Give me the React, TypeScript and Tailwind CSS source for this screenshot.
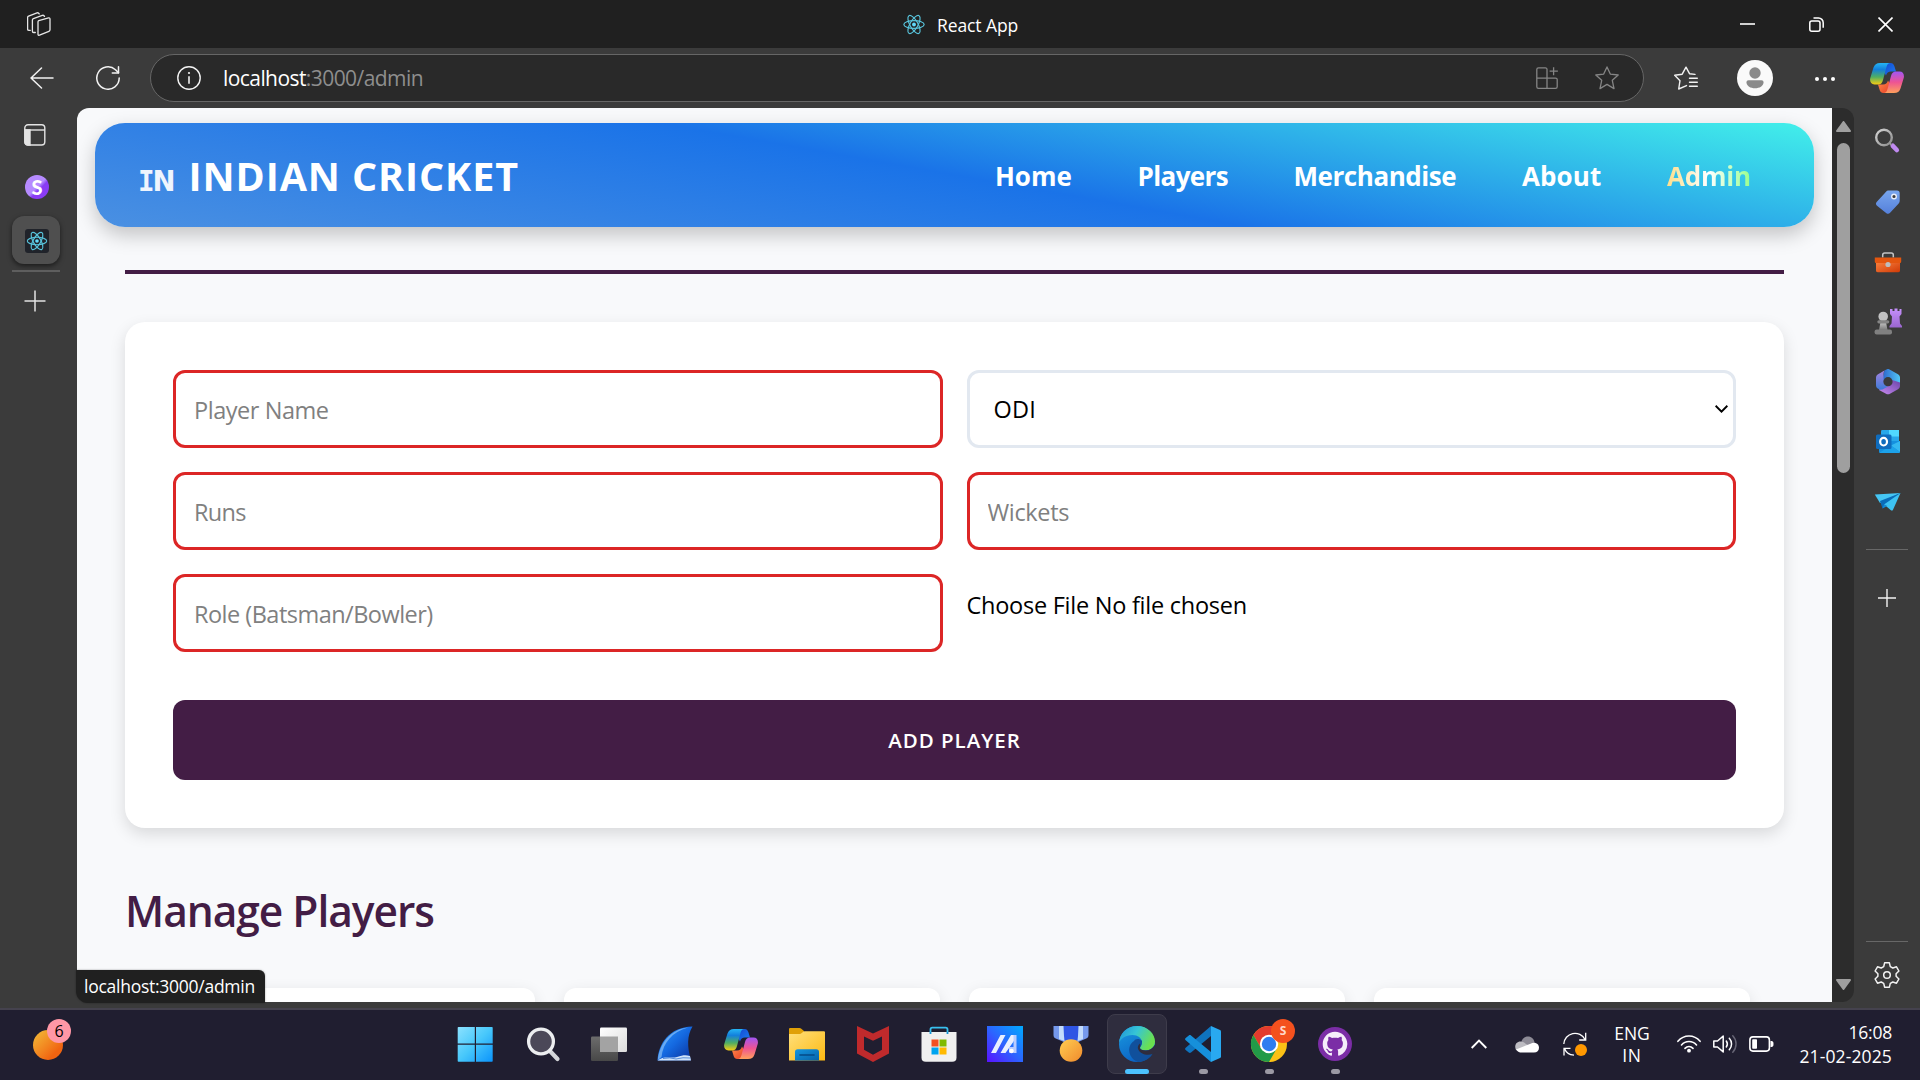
import React from "react";

type P = { className?: string };

const ReactLogo = ({ className = "" }: P) => (
  <svg viewBox="-12 -12 24 24" className={className} fill="none" stroke="#58c4dc" strokeWidth="1.25">
    <circle r="2" fill="#61dafb" stroke="none" />
    <ellipse rx="10.6" ry="4.1" />
    <ellipse rx="10.6" ry="4.1" transform="rotate(60)" />
    <ellipse rx="10.6" ry="4.1" transform="rotate(120)" />
  </svg>
);

const Copilot = ({ className = "" }: P) => (
  <svg viewBox="0 0 34 30" className={className}>
    <defs>
      <linearGradient id="cpA" x1="0" y1="0" x2="0" y2="1">
        <stop offset="0" stopColor="#25b5f5" />
        <stop offset=".3" stopColor="#1380dc" />
        <stop offset=".65" stopColor="#4fae62" />
        <stop offset="1" stopColor="#f9cd12" />
      </linearGradient>
      <linearGradient id="cpB" x1="0" y1="0" x2="0" y2="1">
        <stop offset="0" stopColor="#a155f5" />
        <stop offset=".5" stopColor="#ee5493" />
        <stop offset="1" stopColor="#ffa05c" />
      </linearGradient>
      <linearGradient id="cpC" x1="0" y1="0" x2="1" y2="1">
        <stop offset="0" stopColor="#1449d2" />
        <stop offset="1" stopColor="#1d7df0" />
      </linearGradient>
      <linearGradient id="cpD" x1="0" y1="0" x2="1" y2="1">
        <stop offset="0" stopColor="#ff8a48" />
        <stop offset="1" stopColor="#e8402a" />
      </linearGradient>
    </defs>
    <path d="M16 0h4.500c2.400 0 3.400 1.500 4 3.600L26 8.500h-5c-2.800 0-4.200 1.500-5 4L14 9z" fill="url(#cpC)" />
    <path d="M18 30h-4.500c-2.400 0-3.400-1.500-4-3.600L8 21.500h5c2.800 0 4.200-1.500 5-4L20 21z" fill="url(#cpD)" />
    <path d="M10 0h10.500c-2.300 0-3.300 1.600-4 4L13 17c-.8 3-2.200 4.500-5 4.500H4.500C1 21.500-.6 18.500.3 15L3.400 4.800C4.500 1.500 6.500 0 10 0z" fill="url(#cpA)" />
    <path d="M24 30H13.500c2.300 0 3.300-1.600 4-4L21 13c.8-3 2.200-4.500 5-4.500h3.500c3.500 0 5.100 3 4.200 6.500l-3.100 10.200C29.500 28.500 27.500 30 24 30z" fill="url(#cpB)" />
  </svg>
);

const TitleBar = () => (
  <div className="flex h-12 shrink-0 items-center bg-[#202020] text-white">
    <svg viewBox="0 0 24 24" className="ml-[27px] h-6 w-6" fill="none" stroke="#e6e6e6" strokeWidth="1.3" strokeLinejoin="round" strokeLinecap="round">
      <path d="M11.800 8.600 21.500 5.900c.8-.2 1.500.3 1.500 1.100v10.700c0 .8-.4 1.300-1.100 1.600l-9.400 3.900c-.8.3-1.500-.1-1.500-1V9.800c0-.6.300-1 .8-1.200z" />
      <path d="M8.300 20.500H6.700c-.8 0-1.300-.4-1.300-1.200V8c0-.7.300-1.100 1-1.400L15.300 3.400c.8-.3 1.700 0 2.200 1" />
      <path d="M3.300 18.300h-1.400c-.8 0-1.300-.4-1.300-1.200V5.500c0-.7.300-1.100 1-1.400L10 .9c.8-.3 1.700 0 2.200 1" />
    </svg>
    <ReactLogo className="ml-[851px] h-[23px] w-6" />
    <span className="ml-[11px] mt-0.5 w-[100px] text-[17.5px] leading-6 tracking-[-0.1px]">React App</span>
    <div className="ml-auto flex items-center gap-[54px] pr-[27px]">
      <svg viewBox="0 0 15 15" className="h-[15px] w-[15px]"><path d="M0 7h15" stroke="#fff" strokeWidth="1.600" /></svg>
      <svg viewBox="0 0 15 15" className="h-[15px] w-[15px]" fill="none" stroke="#fff" strokeWidth="1.500">
        <rect x=".8" y="4" width="10.200" height="10.200" rx="2" />
        <path d="M4.500 1h5A4.700 4.700 0 0 1 14.200 5.700v5" />
      </svg>
      <svg viewBox="0 0 15 15" className="h-[15px] w-[15px]"><path d="M.5.5l14 14M14.500.5l-14 14" stroke="#fff" strokeWidth="1.600" /></svg>
    </div>
  </div>
);

const Toolbar = () => (
  <div className="flex h-[60px] shrink-0 items-center">
    <svg viewBox="0 0 24 22" className="ml-[30px] h-[22px] w-6" fill="none" stroke="#f2f2f2" strokeWidth="1.500" strokeLinecap="round" strokeLinejoin="round">
      <path d="M23 11H1M11.500 1 1 11l10.500 10" />
    </svg>
    <svg viewBox="0 0 24 24" className="ml-[42px] h-6 w-6" fill="none" stroke="#f2f2f2" strokeWidth="1.500" strokeLinecap="round" strokeLinejoin="round">
      <path d="M23.200 12A11.200 11.200 0 1 1 19.500 3.700L22.500 6.800" />
      <path d="M22.500.8v6.200h-6.200" />
    </svg>
    <div className="ml-[30px] flex h-12 w-[1494px] items-center rounded-full border border-[#666] bg-[#292929]">
      <svg viewBox="0 0 24 24" className="ml-[26px] h-6 w-6" fill="none" stroke="#f2f2f2" strokeWidth="1.400">
        <circle cx="12" cy="12" r="11.200" />
        <path d="M12 10.200v7.500" strokeWidth="1.600" />
        <circle cx="12" cy="7" r="1.100" fill="#f2f2f2" stroke="none" />
      </svg>
      <div className="ml-[22px] text-[21px] leading-7 tracking-[-0.57px] text-[#8e8e8e]">
        <span className="text-white">localhost</span>:3000/admin
      </div>
      <svg viewBox="0 0 22 22" className="ml-auto mr-[37px] h-[22px] w-[22px]" fill="none" stroke="#858585" strokeWidth="1.300">
        <path d="M11 21.300V2.500c0-1-.5-1.600-1.600-1.600H2.500C1.400.9.800 1.500.8 2.500v17.200c0 1 .6 1.600 1.700 1.600h17c1.100 0 1.700-.6 1.700-1.600v-7.100c0-1-.6-1.500-1.700-1.500H.8" />
        <path d="M17.600.2v8M13.600 4.200h8.300" />
      </svg>
      <svg viewBox="0 0 24 24" className="mr-[24px] h-6 w-6" fill="none" stroke="#858585" strokeWidth="1.300" strokeLinejoin="round">
        <path d="M12 .9l3.300 7.200 7.900.9-5.900 5.300 1.700 8.300-7-4.200-7 4.200 1.700-8.300L.8 9l7.900-.9z" />
      </svg>
    </div>
    <svg viewBox="0 0 24 24" className="ml-[30px] h-6 w-6" fill="none" stroke="#f2f2f2" strokeWidth="1.400" strokeLinejoin="round" strokeLinecap="round">
      <path d="M15.500 12.200h7.800M15.500 16.200h7.800M15.500 20.200h7.800" />
      <path d="M12.500 19.600 4.700 23 6 14.700.7 9.300l7.500-1.100L12 1.200l3.500 6.500 5.500.7" />
    </svg>
    <svg viewBox="0 0 36 36" className="ml-[39px] h-9 w-9">
      <circle cx="18" cy="18" r="18" fill="#fafafa" />
      <circle cx="18" cy="13" r="5.700" fill="#8a8a8a" />
      <path d="M11.500 20.200h13c1.300 0 2 .9 2 2 0 3.900-4 6-8.500 6s-8.500-2.100-8.500-6c0-1.100.7-2 2-2z" fill="#8a8a8a" />
    </svg>
    <div className="ml-[42px] mt-0.5 flex w-5 justify-between">
      <i className="h-1 w-1 rounded-full bg-white" />
      <i className="h-1 w-1 rounded-full bg-white" />
      <i className="h-1 w-1 rounded-full bg-white" />
    </div>
    <Copilot className="ml-[35px] h-[30px] w-[34px]" />
  </div>
);

const LeftRail = () => (
  <div className="flex w-[77px] shrink-0 flex-col">
    <svg viewBox="0 0 22 22" className="ml-6 mt-4 h-[22px] w-[22px]" fill="none" stroke="#e4e4e4" strokeWidth="1.400">
      <rect x=".8" y=".8" width="20" height="20.200" rx="3.200" />
      <path d="M1 6h20" />
      <path d="M1 6h5v15H3.500C2 21 1 20 1 18.500z" fill="#e4e4e4" />
    </svg>
    <div className="ml-[25px] mt-[29px] flex h-6 w-6 items-center justify-center rounded-full bg-gradient-to-br from-[#b68bff] from-50% to-[#8a3cf5] to-60% font-['Lato'] text-[20px] font-black leading-6 text-white">
      S
    </div>
    <div className="ml-3 mt-[17px] flex h-12 w-12 items-center justify-center rounded-xl bg-[#4f4f4f] shadow-[0_2px_5px_rgba(0,0,0,0.55)]">
      <div className="ml-0.5 mt-0.5 flex h-6 w-6 items-center justify-center rounded-[3px] bg-[#20232a]">
        <ReactLogo className="h-[22px] w-[22px]" />
      </div>
    </div>
    <div className="ml-3 mt-1.5 h-0.5 w-12 bg-[#5e5e5e]" />
    <svg viewBox="0 0 22 22" className="ml-[24px] mt-[18px] h-[22px] w-[22px]"><path d="M.500 11h21M11 .5v21" stroke="#e4e4e4" strokeWidth="1.500" /></svg>
  </div>
);

const nav = [
  ["Home", "tracking-[0px]"],
  ["Players", "tracking-[-0.6px]"],
  ["Merchandise", "tracking-[-0.45px]"],
  ["About", "tracking-[0.1px]"],
];

const Header = () => (
  <header className="mx-[18px] mt-[15px] flex h-[104px] shrink-0 items-center rounded-[30px] bg-[linear-gradient(10deg,#4a90e2_0%,#1a73e8_50%,#42f0ea_100%)] text-white shadow-[0_8px_20px_rgba(0,0,0,0.22)]">
    <div className="ml-[43px] mt-[12px] flex items-center text-[27.5px] font-bold leading-8 text-[#eff5fd]">
      <span className="font-['DejaVu_Sans_Mono']">I</span>
      <span className="-ml-0.5 font-['DejaVu_Sans']">N</span>
    </div>
    <div className="ml-[13px] mt-0.5 text-[39.5px] font-bold leading-[52px] tracking-[0.9px]">INDIAN CRICKET</div>
    <nav className="ml-auto mr-[59px] mt-0.5 grid grid-cols-[142.600px_156px_228.500px_145px_88px] text-[26px] font-bold leading-9">
      {nav.map(([t, c]) => (
        <a key={t} className={c}>{t}</a>
      ))}
      <a className="w-[84px] bg-[linear-gradient(90deg,#ffdf8c,#fff_50%,#98ff8c)] bg-clip-text tracking-[-0.2px] text-transparent">Admin</a>
    </nav>
  </header>
);

const inputCls =
  "h-[78px] w-full rounded-xl border-[3px] border-[#dc2626] bg-white pl-[18px] pt-0.5 text-[23.5px] text-black outline-none placeholder:text-[#808080]";

const Page = () => (
  <main className="flex w-[1755px] shrink-0 flex-col overflow-hidden rounded-l-xl bg-[#f8f9fb]">
    <Header />
    <div className="flex flex-col px-[48px]">
      <hr className="mt-[43px] h-1 border-0 bg-[#431d45]" />
      <section className="mt-12 flex h-[506px] flex-col rounded-[20px] bg-white p-12 shadow-[0_6px_16px_rgba(0,0,0,0.13)]">
        <div className="grid grid-cols-2 gap-6">
          <input className={inputCls + " tracking-[-0.45px]"} placeholder="Player Name" />
          <div className="flex h-[78px] items-center rounded-xl border-[3px] border-[#e2e8f0] pl-6 pr-[5px] text-[23.5px] tracking-[0.2px] text-black">
            <span className="mt-0.5">ODI</span>
            <svg viewBox="0 0 13 8" className="ml-auto h-2 w-[13px]" fill="none" stroke="#000" strokeWidth="2"><path d="M.600.800 6.500 6.600 12.400.8" /></svg>
          </div>
          <input className={inputCls + " tracking-[-0.7px]"} placeholder="Runs" />
          <input className={inputCls + " tracking-[-0.35px]"} placeholder="Wickets" />
          <input className={inputCls + " tracking-[-0.52px]"} placeholder="Role (Batsman/Bowler)" />
          <div className="pt-[15px] text-[23.5px] leading-8 tracking-[-0.25px] text-black">Choose File No file chosen</div>
        </div>
        <button className="mt-12 h-20 rounded-xl bg-[#431d45] text-[20.5px] font-semibold tracking-[0.95px] text-white">ADD PLAYER</button>
      </section>
      <h2 className="mt-[53px] text-[42.5px] font-semibold leading-[60px] tracking-[-1.03px] text-[#431d45]">Manage Players</h2>
      <div className="mt-[47px] grid grid-cols-4 gap-[29px] px-[34px]">
        {[0, 1, 2, 3].map((i) => (
          <div key={i} className="h-24 rounded-xl bg-white shadow-[0_4px_15px_rgba(0,0,0,0.1)]" />
        ))}
      </div>
    </div>
  </main>
);

const Scrollbar = () => (
  <div className="flex w-[22px] shrink-0 flex-col items-center rounded-r-xl bg-[#2c2c2c] pb-3 pt-[13px]">
    <svg viewBox="0 0 15 11" className="h-[11px] w-[15px]"><path d="M7.500 1 14 10H1z" fill="#9f9f9f" stroke="#9f9f9f" strokeWidth="2" strokeLinejoin="round" /></svg>
    <div className="mt-[11px] h-[330px] w-[13px] rounded-full bg-[#9f9f9f]" />
    <svg viewBox="0 0 15 11" className="mt-auto h-[11px] w-[15px]"><path d="M7.500 10 14 1H1z" fill="#9f9f9f" stroke="#9f9f9f" strokeWidth="2" strokeLinejoin="round" /></svg>
  </div>
);

const railIcons = [
  <>
    <defs>
      <linearGradient id="gl" x1="0" y1="0" x2="1" y2="1"><stop stopColor="#d4d4d4" /><stop offset="1" stopColor="#8c8c8c" /></linearGradient>
    </defs>
    <g transform="translate(0 -1.500)">
      <circle cx="10" cy="11" r="7.800" fill="none" stroke="url(#gl)" strokeWidth="2.400" />
      <path d="M18.800 19.300l4 4.200" stroke="#c08af0" strokeWidth="4.600" strokeLinecap="round" />
      <path d="M15.600 16.600l1.800 1.800" stroke="#999" strokeWidth="2" />
    </g>
  </>,
  <>
    <defs>
      <linearGradient id="tg" x1="0" y1="0" x2="0" y2="1"><stop stopColor="#78a6ee" /><stop offset="1" stopColor="#5580da" /></linearGradient>
    </defs>
    <path d="M14.500 2.500H23c1.700 0 2.700 1 2.700 2.700V13c0 1-.3 1.700-1 2.500l-8.600 9.300c-1.300 1.400-2.600 1.400-4 .1L3 17.800c-1.400-1.400-1.400-2.700-.1-4L12.300 3.500c.6-.7 1.200-1 2.200-1z" fill="url(#tg)" />
    <circle cx="20" cy="8.500" r="2.300" fill="#3b3b3b" stroke="#e8eefc" strokeWidth="1.400" />
  </>,
  <>
    <defs>
      <linearGradient id="tb" x1="0" y1="0" x2="1" y2="1"><stop stopColor="#f9813f" /><stop offset="1" stopColor="#d03a06" /></linearGradient>
    </defs>
    <path d="M8.700 9.500V7c0-1.300.7-2 2-2h6.600c1.300 0 2 .7 2 2v2.500" fill="none" stroke="#c4c4c4" strokeWidth="1.500" />
    <path d="M2 14h24v8.600c0 1-.6 1.700-1.700 1.700H3.700c-1.100 0-1.700-.7-1.700-1.700z" fill="url(#tb)" />
    <path d="M.800 9.400h26.400v4c0 1-.6 1.600-1.600 1.600H2.400c-1 0-1.600-.6-1.600-1.600z" fill="#e4560f" />
    <circle cx="14" cy="16.500" r="2.600" fill="#bdbdbd" />
  </>,
  <>
    <defs>
      <linearGradient id="rk" x1="0" y1="0" x2="0" y2="1"><stop stopColor="#c590fb" /><stop offset="1" stopColor="#9a66cf" /></linearGradient>
      <linearGradient id="pw" x1="0" y1="0" x2="0" y2="1"><stop stopColor="#c8c8c8" /><stop offset="1" stopColor="#7a7a7a" /></linearGradient>
    </defs>
    <path d="M16 1l2.500 0v2h2V.600h3V3h2V1h2v5l-2 2.500.5 7 2 2.500v1.500H15.500V18l2-2.500.5-7L16 6z" fill="url(#rk)" />
    <circle cx="9.200" cy="8.500" r="4.800" fill="#c2c2c2" />
    <path d="M6.500 14h5.500l1.500 8H5z" fill="url(#pw)" />
    <rect x="3.300" y="12.200" width="12" height="3.200" rx="1.600" fill="#858585" />
    <rect x=".600" y="21.500" width="17.400" height="5" rx="2" fill="#808080" />
  </>,
  <>
    <defs>
      <linearGradient id="m1" x1="0" y1="0" x2="1" y2="0"><stop stopColor="#2b62cc" /><stop offset="1" stopColor="#52c8f5" /></linearGradient>
      <linearGradient id="m2" x1="0" y1="0" x2="0" y2="1"><stop stopColor="#a683e0" /><stop offset="1" stopColor="#3d7bd8" /></linearGradient>
      <linearGradient id="m3" x1="0" y1="1" x2="1" y2="0"><stop stopColor="#c98af0" /><stop offset="1" stopColor="#6a44a8" /></linearGradient>
    </defs>
    <path d="M10.500 2.600 12.500 1.500c1-.6 2-.6 3 0L24 6.200c1.300.8 2 1.900 2 3.500V17L8 12z" fill="url(#m1)" />
    <path d="M26 14.500v3.200c0 1.600-.7 2.700-2 3.500l-8 4.600c-1.300.7-2.700.7-4 0L5 22l4-6 9-4z" fill="url(#m3)" />
    <path d="M10.500 2.600C9 5 9.500 8 9.800 13.500L14 18.500 8.500 21.500 6 21.700c-2.700-1.200-4-2.200-4-4.500V9.800C2 8 2.600 7 4 6.200z" fill="url(#m2)" />
    <circle cx="14" cy="13.700" r="4.600" fill="#3b3b3b" />
  </>,
  <>
    <rect x="7" y="2" width="18" height="13" rx="1.200" fill="#28a8ea" />
    <rect x="15" y="2" width="10" height="6.500" fill="#50d9ff" />
    <path d="M5 13h21v10.500c0 .9-.5 1.500-1.500 1.500H6.500c-1 0-1.500-.6-1.500-1.500z" fill="#1490df" />
    <path d="M26 13v11L17 17.500z" fill="#35b8f1" />
    <path d="M5 25l12-7.500 9 6.500-1 1z" fill="#1ca2ea" />
    <rect x="2" y="6.500" width="15.500" height="14.500" rx="1.500" fill="#0f6cbd" />
    <ellipse cx="9.600" cy="13.700" rx="3.400" ry="3.800" fill="none" stroke="#fff" strokeWidth="2.200" />
  </>,
  <>
    <path d="M.800 6.500 26.500 5 6 15z" fill="#45c6f4" />
    <path d="M6 13 26.500 5 8.500 20.500z" fill="#0a6cb8" />
    <path d="M10 16.500 26.500 5 19 21.800c-.4.900-1 1-1.800.6z" fill="#3dc2f2" />
    <path d="M8.500 20.500 10 16.300l3.300 1.800z" fill="#1488d4" />
  </>,
];

const RightRail = () => (
  <div className="flex flex-1 flex-col items-center pt-1">
    {railIcons.map((g, i) => (
      <div key={i} className="flex h-[60px] items-center pl-px">
        <svg viewBox="0 0 28 28" className="h-7 w-7">{g}</svg>
      </div>
    ))}
    <div className="mt-[17px] h-px w-[42px] bg-[#676767]" />
    <svg viewBox="0 0 18 18" className="mr-px mt-[39px] h-[18px] w-[18px]"><path d="M0 9h18M9 0v18" stroke="#f2f2f2" strokeWidth="1.400" /></svg>
    <div className="mt-auto h-px w-[42px] bg-[#676767]" />
    <svg viewBox="0 0 28 28" className="mb-[13px] mt-[19px] h-7 w-7" fill="none" stroke="#f2f2f2" strokeWidth="1.500" strokeLinejoin="round">
      <circle cx="14" cy="14" r="3.300" />
      <path d="M11.600 1.800h4.800l.9 3.800 2.500 1.400 3.700-1.200 2.400 4.200-2.800 2.700v2.600l2.800 2.700-2.400 4.200-3.700-1.200-2.500 1.400-.9 3.800h-4.800l-.9-3.800L8.200 21l-3.700 1.200L2.100 18l2.800-2.700v-2.600L2.100 10l2.400-4.200L8.200 7l2.500-1.400z" />
    </svg>
  </div>
);

type TaskApp = { art: React.ReactNode; dot?: boolean; active?: boolean; badge?: boolean };

const taskApps: TaskApp[] = [
  {
    art: (
      <>
        <defs><linearGradient id="wn" gradientUnits="userSpaceOnUse" x1="0" y1="0" x2="36" y2="36"><stop stopColor="#8fe3ff" /><stop offset=".5" stopColor="#48c8fb" /><stop offset="1" stopColor="#0a93fb" /></linearGradient></defs>
        <path d="M1.500.900h16.300v16.600H.700V1.700q0-.8.800-.8zM19 .900h16q.7 0 .7.800v15.800H19zM.700 18.800h17.100v17H1.500q-.8 0-.8-.8zM19 18.800h16.700V35q0 .8-.7.800H19z" fill="url(#wn)" />
      </>
    ),
  },
  {
    art: (
      <>
        <path d="M24 24l8.500 9" stroke="#d4d6da" strokeWidth="4.200" strokeLinecap="round" />
        <circle cx="16" cy="15.500" r="12.400" fill="#4b4858" stroke="#eceef0" strokeWidth="3.300" />
      </>
    ),
  },
  {
    art: (
      <>
        <defs>
          <linearGradient id="tv" x1="0" y1="0" x2="1" y2="1"><stop stopColor="#fff" /><stop offset="1" stopColor="#dcdcdc" /></linearGradient>
          <linearGradient id="tw" x1="0" y1="0" x2="0" y2="1"><stop stopColor="#6c6c6c" /><stop offset="1" stopColor="#484848" /></linearGradient>
        </defs>
        <rect x="0" y="10.500" width="27" height="24.500" rx="1.300" fill="url(#tw)" />
        <rect x="9" y="1.500" width="27" height="24.500" rx="1.300" fill="url(#tv)" />
        <path d="M9 10.500h18V26H9z" fill="#a3a3a3" />
      </>
    ),
  },
  {
    art: (
      <>
        <defs><linearGradient id="sh" x1="0" y1="0" x2="1" y2="1"><stop stopColor="#2d9bff" /><stop offset=".5" stopColor="#1468e0" /><stop offset="1" stopColor="#0a2f98" /></linearGradient></defs>
        <path d="M.500 34.500C1.500 18 12 1 35.500.500 30 10 30 20 34 34.500z" fill="url(#sh)" />
        <path d="M.800 34C2.500 18 13 3.500 31 1.500 15 6 6 17 4.500 31z" fill="#9ccdf8" opacity=".6" />
        <path d="M.500 34.500C8 29 14 33 20 31s9-2 13-1l1 4.500z" fill="#cfe3fa" />
        <path d="M6 32.500q7-1.500 13 .5 7-2 14-1" fill="none" stroke="#3b77cf" strokeWidth=".8" />
      </>
    ),
  },
  { art: <svg x="1" y="3" width="34" height="30" viewBox="0 0 34 30"><Copilot /></svg> },
  {
    art: (
      <>
        <defs>
          <linearGradient id="fd" x1="0" y1="0" x2="1" y2="1"><stop stopColor="#ffe07c" /><stop offset="1" stopColor="#fcb912" /></linearGradient>
          <linearGradient id="fe" x1="0" y1="0" x2="1" y2="1"><stop stopColor="#1596e0" /><stop offset="1" stopColor="#0762a8" /></linearGradient>
        </defs>
        <path d="M0 3.300C0 2.500.600 2 1.300 2h9.200c.700 0 1.300.2 1.800.7L15 5v4H0z" fill="#e0a008" />
        <path d="M0 8h10.500c1 0 1.600-.3 2.200-.9l1.300-1.200c.5-.5 1-.7 1.700-.7h19c.800 0 1.300.5 1.300 1.300V34.500H0z" fill="url(#fd)" />
        <path d="M6 34.500V26c0-1.700 1-2.700 2.700-2.700h18.600c1.700 0 2.700 1 2.700 2.700v8.500z" fill="url(#fe)" />
        <path d="M11 29h14" stroke="#054a86" strokeWidth="1.600" strokeLinecap="round" />
      </>
    ),
  },
  {
    art: <path fillRule="evenodd" d="M2 0l16 7.500L34 0v27.500L18 36 2 27.500zM9 10.500V23.800l9 4.900 9-4.900V10.500l-9 4.300z" fill="#bf2a2c" />,
  },
  {
    art: (
      <>
        <path d="M9.500 8V3.500q0-1.800 1.800-1.800h13.400q1.800 0 1.800 1.800V8" fill="none" stroke="#38c0ee" strokeWidth="1.800" />
        <path d="M.500 6h35v25.500q0 4.300-4.300 4.300H4.800Q.500 35.800.500 31.500z" fill="#f0f0f0" />
        <path d="M9.500 6v2M26.500 6v2" stroke="#1495d8" strokeWidth="1.800" />
        <path d="M10.500 13.500h7v7h-7z" fill="#f25022" /><path d="M18.500 13.500h7v7h-7z" fill="#7fba00" />
        <path d="M10.500 21.500h7v7h-7z" fill="#00a4ef" /><path d="M18.500 21.500h7v7h-7z" fill="#ffb900" />
      </>
    ),
  },
  {
    art: (
      <>
        <defs><linearGradient id="ma" x1="0" y1="1" x2="1" y2="0"><stop stopColor="#5a12ff" /><stop offset=".5" stopColor="#2b66ff" /><stop offset="1" stopColor="#00aaff" /></linearGradient></defs>
        <path d="M0 0h36v36H0z" fill="url(#ma)" />
        <path d="M13.500 9h5L9 27H4zM24 9h5v3L18.500 27h-5z" fill="#e9efff" />
        <path d="M26.500 9h3v18h-3zM22 21h5v5.500h-5z" fill="#b9ccff" />
        <circle cx="24.500" cy="25" r="2.300" fill="#fff" />
      </>
    ),
  },
  {
    art: (
      <>
        <defs><linearGradient id="md" x1="0" y1="0" x2="1" y2="1"><stop stopColor="#ffce52" /><stop offset="1" stopColor="#f08a2c" /></linearGradient></defs>
        <path d="M.500 0h35v9c0 2-.8 3-2.300 3.600L24 16.500H12L2.800 12.600C1.300 12 .5 11 .5 9z" fill="#7599ec" />
        <path d="M11 0h14v14.500H11z" fill="#2f55e4" />
        <path d="M6 0h4l1.500 15L6 13zM26 0h4v13l-5.500 2z" fill="#c2dbfb" />
        <circle cx="18" cy="24.500" r="11.300" fill="url(#md)" />
      </>
    ),
  },
  {
    active: true,
    art: (
      <>
        <defs>
          <linearGradient id="e1" x1="0" y1="0" x2="1" y2=".4"><stop stopColor="#1d8fd8" /><stop offset=".5" stopColor="#36c5d6" /><stop offset="1" stopColor="#6be04f" /></linearGradient>
          <linearGradient id="e2" x1="0" y1="0" x2=".5" y2="1"><stop stopColor="#1a9be0" /><stop offset="1" stopColor="#0b62c4" /></linearGradient>
        </defs>
        <circle cx="18" cy="18" r="18" fill="url(#e2)" />
        <path d="M0 17C.500 7 8.500 0 18 0c11 0 18 8 18 15.500 0 5.500-4.500 9-9 9-3.500 0-6-1.300-6-2.500s2-2 2-5.500C23 12 18.500 9 13.500 9 6 9 1.500 13 0 17z" fill="url(#e1)" />
        <path d="M15 15c1-2 5-3 8 0 .300 4-2 5-2 7s3 2.500 6 2.500c3.500 0 6-1.500 8-3.800L34 27C32 32 25 36 19 36 9.500 32.500 7 20 15 15z" fill="#10509c" />
        <path d="M21 22c0 1.500 2.500 2.500 6 2.500 3.500 0 7-2 8.700-5.500L37 21v5l-3.500 2C28 30 21 28 19 23c-.5-2 0-4 2-5.500.800 1.500 0 3 0 4.500z" fill="#2f2d3e" />
      </>
    ),
  },
  {
    dot: true,
    art: (
      <>
        <path d="M26 0l9 4c.600.300 1 .8 1 1.500v25c0 .7-.4 1.200-1 1.500l-9 4z" fill="#29a9f0" />
        <path d="M26 0v10L6 26.500c-.8.600-1.500.6-2.200 0L.700 24c-.8-.8-.8-1.500 0-2.300z" fill="#0f74bf" />
        <path d="M26 36V26L6 9.500c-.8-.6-1.500-.6-2.200 0L.700 12c-.8.800-.8 1.500 0 2.300z" fill="#1690db" />
      </>
    ),
  },
  {
    dot: true,
    badge: true,
    art: (
      <>
        <circle cx="18" cy="18" r="18" fill="#fbc116" />
        <path d="M2.400 9A18 18 0 0 1 33.600 9H18L10.200 22.500z" fill="#e33b2e" />
        <path d="M2.400 9A18 18 0 0 0 18 36l7.800-13.500L18 27 10.200 22.500z" fill="#229a48" />
        <circle cx="18" cy="18" r="9.200" fill="#fff" />
        <circle cx="18" cy="18" r="7.200" fill="#2f7df0" />
      </>
    ),
  },
  {
    dot: true,
    art: (
      <>
        <circle cx="18" cy="18" r="17" fill="#7b2da6" />
        <path
          transform="translate(5.700 5.700) scale(1.540)"
          fill="#f5eefa"
          d="M8 0C3.580 0 0 3.580 0 8c0 3.540 2.290 6.530 5.470 7.590.4.070.55-.17.55-.38 0-.19-.01-.82-.01-1.490-2.010.37-2.530-.49-2.690-.94-.09-.23-.48-.94-.82-1.130-.28-.15-.68-.52-.01-.53.63-.01 1.080.58 1.230.82.72 1.210 1.870.87 2.330.66.07-.52.28-.87.51-1.070-1.780-.2-3.640-.89-3.640-3.950 0-.87.31-1.590.82-2.150-.08-.2-.36-1.020.08-2.120 0 0 .67-.21 2.200.82.64-.18 1.320-.27 2-.27s1.360.09 2 .27c1.530-1.040 2.200-.82 2.200-.82.44 1.100.16 1.920.08 2.120.51.56.82 1.270.82 2.150 0 3.070-1.870 3.750-3.650 3.950.29.25.54.73.54 1.480 0 1.070-.01 1.930-.01 2.200 0 .21.15.46.55.38A8.010 8.010 0 0 0 16 8c0-4.420-3.580-8-8-8z"
        />
      </>
    ),
  },
];

const Taskbar = () => (
  <div className="flex h-[72px] shrink-0 items-center border-t-2 border-[#45424e] bg-[#201e30] pb-0.5 text-white">
    <div className="relative ml-[33px] mt-0.5 h-[30px] w-[30px] rounded-full bg-gradient-to-br from-[#f0bd38] to-[#f06410] to-75%">
      <div className="absolute -top-[11px] left-[14px] flex h-6 w-6 items-center justify-center rounded-full bg-[#ff97a6] text-[16px] text-black">6</div>
    </div>
    <div className="ml-[379px] flex">
      {taskApps.map((a, i) => (
        <div
          key={i}
          className={
            a.active
              ? "relative mx-[3px] flex h-[60px] w-[60px] items-center justify-center rounded-lg border border-[#3e3c4b] bg-[#2f2d3e]"
              : "relative mx-[3px] flex h-[60px] w-[60px] items-center justify-center first:mr-[5px]"
          }
        >
          <svg viewBox="0 0 36 36" className="h-9 w-9 overflow-visible">{a.art}</svg>
          {a.badge && (
            <div className="absolute left-[32px] top-[5px] flex h-6 w-6 items-center justify-center rounded-full bg-[#f4511e] text-[12px] font-bold text-[#ffd9cc]">S</div>
          )}
          {a.active && <div className="absolute -bottom-px left-[17px] h-[5px] w-6 rounded-full bg-[#4cc2ff]" />}
          {a.dot && <div className="absolute bottom-0 left-[26px] h-[5px] w-[9px] rounded-full bg-[#9b99a4]" />}
        </div>
      ))}
    </div>
    <svg viewBox="0 0 16 10" className="ml-[103px] h-2.5 w-4" fill="none" stroke="#fff" strokeWidth="1.900"><path d="M.700 9 8 1.500 15.300 9" /></svg>
    <svg viewBox="0 0 24 17" className="ml-7 h-[17px] w-6">
      <path d="M6 7C7 2.500 10 .500 13 .500c3.500 0 6 2.500 6.500 6l-4 4z" fill="#8d8b96" />
      <path d="M1 14C-1 10 1 5.500 5.500 5.500c2.500 0 4 1 5.500 2.500l6 3z" fill="#bdbcc2" />
      <path d="M3 15.500c-.8-.5-1.700-1.200-2-2L15.500 7.800c1.500-.8 3.500-1.300 5-.8 2.500.8 3.500 2.500 3.500 4.700 0 3-2 4.800-5 4.800H6c-1.200 0-2-.3-3-1z" fill="#fff" />
    </svg>
    <svg viewBox="0 0 24 24" className="ml-6 h-6 w-6" fill="none" stroke="#fff" strokeWidth="1.300">
      <path d="M.800 12A11.200 11.200 0 0 1 22 7.500M22.700.8v7.200h-6.500" />
      <path d="M11 23.200C6.500 22.800 3 20.500 1.500 16.500M1 23.500v-7.200h6.500" />
      <circle cx="18" cy="18" r="6" fill="#ff9800" stroke="none" />
    </svg>
    <div className="ml-[25px] w-10 text-center text-[17.5px] leading-[22.500px]">
      <div>ENG</div>
      <div className="tracking-[0.6px]">IN</div>
    </div>
    <svg viewBox="0 0 24 18" className="ml-[25px] h-[18px] w-6" fill="none" stroke="#fff" strokeWidth="1.600" strokeLinecap="round">
      <path d="M.900 6.300C7-.700 17-.700 23.100 6.300M4.500 10c4-4.600 11-4.600 15 0M8 13.400c2.300-2.600 5.700-2.600 8 0" />
      <circle cx="12" cy="15.700" r="1.900" fill="#fff" stroke="none" />
    </svg>
    <svg viewBox="0 0 24 18" className="ml-3 h-[18px] w-6" fill="none" stroke="#fff" strokeWidth="1.500" strokeLinecap="round" strokeLinejoin="round">
      <path d="M.800 6v6h3.700l5.700 4.900V1.100L4.500 6z" />
      <path d="M13.300 6c1.300 1.800 1.300 4.200 0 6M16.300 3.300c3 3.300 3 8.100 0 11.400" />
      <path d="M19.800.8c4.300 4.500 4.300 11.900 0 16.400" stroke="#666474" />
    </svg>
    <svg viewBox="0 0 25 16" className="ml-3 h-4 w-[25px]">
      <rect x=".900" y=".900" width="19.500" height="14.200" rx="3" fill="none" stroke="#fff" strokeWidth="1.600" />
      <rect x="3.200" y="3.200" width="4.800" height="9.600" rx=".8" fill="#fff" />
      <path d="M21.500 5h1c1.300 0 2 .8 2 3s-.7 3-2 3h-1z" fill="#fff" />
    </svg>
    <div className="ml-auto mr-[28px] text-right text-[17.5px] leading-6">
      <div className="tracking-[-0.2px]">16:08</div>
      <div className="tracking-[0.13px]">21-02-2025</div>
    </div>
  </div>
);

export default function App() {
  return (
    <div className="flex h-[1080px] w-[1920px] flex-col overflow-hidden bg-[#3b3b3b] font-['Open_Sans','Noto_Sans',sans-serif]">
      <TitleBar />
      <Toolbar />
      <div className="relative mb-1.5 flex h-[894px] shrink-0">
        <LeftRail />
        <Page />
        <Scrollbar />
        <RightRail />
        <div className="absolute -bottom-px left-[76px] flex h-[33px] w-[189px] items-center rounded-bl-xl rounded-tr-md bg-[#202020] pl-2 text-[17.5px] tracking-[-0.26px] text-white shadow-[0_0_2px_rgba(0,0,0,0.4)]">
          localhost:3000/admin
        </div>
      </div>
      <Taskbar />
    </div>
  );
}
